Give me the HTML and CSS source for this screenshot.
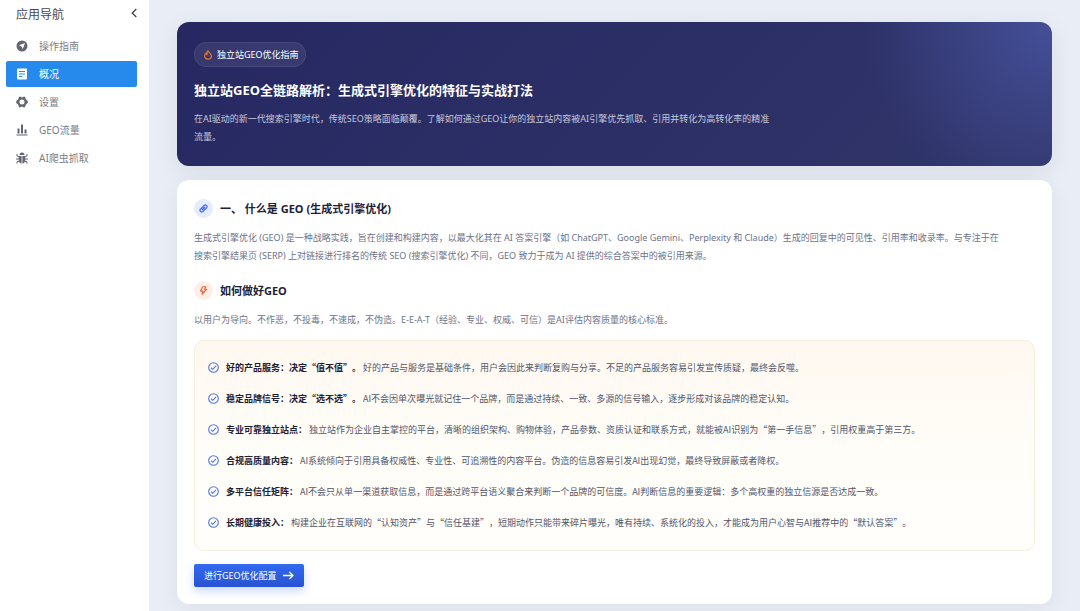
FILE: index.html
```
<!DOCTYPE html>
<html lang="zh-CN">
<head>
    <meta charset="UTF-8">
    <meta name="viewport" content="width=device-width, initial-scale=1.0">
    <title>独立站GEO优化指南</title>
    <link rel="stylesheet" href="styles.css">
</head>
<body>
    <aside class="sidebar">
        <div class="sidebar-header">
            <h2>应用导航</h2>
            <button class="collapse-btn" type="button" aria-label="收起导航">
                <svg width="6" height="10" viewBox="0 0 6 10" fill="none" stroke="currentColor" stroke-width="1.3"><path d="M5.300 1 1.200 5l4.100 4"/></svg>
            </button>
        </div>
        <nav class="menu">
            <a href="#guide" class="menu-item">
                <svg class="menu-icon" viewBox="0 0 24 24" fill="currentColor"><path fill-rule="evenodd" d="M12 1a11 11 0 1 0 0 22 11 11 0 0 0 0-22zM18 6l-4.500 12-2.500-5-5-2.500z"/></svg>
                <span>操作指南</span>
            </a>
            <a href="#overview" class="menu-item active">
                <svg class="menu-icon" viewBox="0 0 24 24" fill="currentColor"><path fill-rule="evenodd" d="M4 1h16a2 2 0 0 1 2 2v18a2 2 0 0 1-2 2H4a2 2 0 0 1-2-2V3a2 2 0 0 1 2-2zM6 6v2h12V6zM6 11v2h12v-2zM6 16v2h7v-2z"/></svg>
                <span>概况</span>
            </a>
            <a href="#settings" class="menu-item">
                <svg class="menu-icon" viewBox="0 0 24 24" fill="currentColor"><path fill-rule="evenodd" d="M6 1.500h4l2 2 2-2h4l1.500 5 4 3.500v4l-4 3.500-1.500 5h-4l-2-2-2 2H6l-1.500-5-4-3.500v-4l4-3.500zM12 7a5 5 0 1 0 0 10 5 5 0 0 0 0-10z"/></svg>
                <span>设置</span>
            </a>
            <a href="#traffic" class="menu-item">
                <svg class="menu-icon" viewBox="0 0 24 24" fill="currentColor"><path d="M3 9h4v10H3zM10 1h4v18h-4zM17 11h4v8h-4zM1 21h22v2H1z"/></svg>
                <span>GEO流量</span>
            </a>
            <a href="#crawler" class="menu-item">
                <svg class="menu-icon" viewBox="0 0 24 24" fill="currentColor"><path d="M7 6a5 5 0 0 1 10 0zM5.500 8h5.700v15C8 22.500 5.500 20 5.500 16zM12.800 8h5.700v8c0 4-2.500 6.500-5.700 7z"/><path d="M7 10 2 8V4M17 10l5-2V4M6 14H0M18 14h6M7 18l-5 1.500V23M17 18l5 1.500V23" fill="none" stroke="currentColor" stroke-width="2"/></svg>
                <span>AI爬虫抓取</span>
            </a>
        </nav>
    </aside>

    <main class="content">
        <section class="hero">
            <div class="badge">
                <svg class="badge-icon" viewBox="0 0 20 20" fill="none" stroke="currentColor" stroke-width="2.4" stroke-linejoin="round"><path d="M10 1.500c.5 3 6.800 5.500 6.800 10.500a6.800 6.300 0 0 1-13.600 0c0-2.500 1.200-4.500 2.800-5.800.3 1.600 1 2.500 2 3C7.600 6.200 8.200 3.500 10 1.500z"/></svg>
                <span>独立站GEO优化指南</span>
            </div>
            <h1>独立站GEO全链路解析：生成式引擎优化的特征与实战打法</h1>
            <p>在AI驱动的新一代搜索引擎时代，传统SEO策略面临颠覆。了解如何通过GEO让你的独立站内容被AI引擎优先抓取、引用并转化为高转化率的精准流量。</p>
        </section>

        <section class="card">
            <div class="section-title">
                <span class="round-icon blue">
                    <svg width="9" height="9" viewBox="0 0 24 24" fill="none" stroke="currentColor" stroke-width="3.6" stroke-linecap="round" stroke-linejoin="round"><path d="M8.500 15.500l7-7M10.500 7l3-3a4.600 4.600 0 0 1 6.500 6.500l-3 3a4.600 4.600 0 0 1-5 1M13.500 17l-3 3A4.600 4.600 0 0 1 4 13.500l3-3a4.600 4.600 0 0 1 5-1"/></svg>
                </span>
                <h2>一、 什么是 GEO (生成式引擎优化)</h2>
            </div>
            <p class="text">生成式引擎优化 (GEO) 是一种战略实践，旨在创建和构建内容，以最大化其在 AI 答案引擎（如 ChatGPT、Google Gemini、Perplexity 和 Claude）生成的回复中的可见性、引用率和收录率。与专注于在搜索引擎结果页 (SERP) 上对链接进行排名的传统 SEO (搜索引擎优化) 不同，GEO 致力于成为 AI 提供的综合答案中的被引用来源。</p>

            <div class="section-title">
                <span class="round-icon orange">
                    <svg width="9" height="9" viewBox="0 0 24 24" fill="none" stroke="currentColor" stroke-width="3" stroke-linejoin="round"><path d="M9.500 2H18l-3.500 6.500H21L8 22l2.500-8.500H4z"/></svg>
                </span>
                <h2>如何做好GEO</h2>
            </div>
            <p class="text">以用户为导向。不作恶，不投毒，不速成，不伪造。E-E-A-T（经验、专业、权威、可信）是AI评估内容质量的核心标准。</p>

            <ul class="points">
                <li>
                    <svg class="check" viewBox="0 0 24 24"><circle cx="12" cy="12" r="10.500"/><path d="M6.500 12.500l4 3.500 7-7.500"/></svg>
                    <p><strong>好的产品服务：决定“值不值”。</strong>好的产品与服务是基础条件，用户会因此来判断复购与分享。不足的产品服务容易引发宣传质疑，最终会反噬。</p>
                </li>
                <li>
                    <svg class="check" viewBox="0 0 24 24"><circle cx="12" cy="12" r="10.500"/><path d="M6.500 12.500l4 3.500 7-7.500"/></svg>
                    <p><strong>稳定品牌信号：决定“选不选”。</strong>AI不会因单次曝光就记住一个品牌，而是通过持续、一致、多源的信号输入，逐步形成对该品牌的稳定认知。</p>
                </li>
                <li>
                    <svg class="check" viewBox="0 0 24 24"><circle cx="12" cy="12" r="10.500"/><path d="M6.500 12.500l4 3.500 7-7.500"/></svg>
                    <p><strong>专业可靠独立站点：</strong>独立站作为企业自主掌控的平台，清晰的组织架构、购物体验，产品参数、资质认证和联系方式，就能被AI识别为“第一手信息”，引用权重高于第三方。</p>
                </li>
                <li>
                    <svg class="check" viewBox="0 0 24 24"><circle cx="12" cy="12" r="10.500"/><path d="M6.500 12.500l4 3.500 7-7.500"/></svg>
                    <p><strong>合规高质量内容：</strong>AI系统倾向于引用具备权威性、专业性、可追溯性的内容平台。伪造的信息容易引发AI出现幻觉，最终导致屏蔽或者降权。</p>
                </li>
                <li>
                    <svg class="check" viewBox="0 0 24 24"><circle cx="12" cy="12" r="10.500"/><path d="M6.500 12.500l4 3.500 7-7.500"/></svg>
                    <p><strong>多平台信任矩阵：</strong>AI不会只从单一渠道获取信息，而是通过跨平台语义聚合来判断一个品牌的可信度。AI判断信息的重要逻辑：多个高权重的独立信源是否达成一致。</p>
                </li>
                <li>
                    <svg class="check" viewBox="0 0 24 24"><circle cx="12" cy="12" r="10.500"/><path d="M6.500 12.500l4 3.500 7-7.500"/></svg>
                    <p><strong>长期健康投入：</strong>构建企业在互联网的“认知资产”与“信任基建”，短期动作只能带来碎片曝光，唯有持续、系统化的投入，才能成为用户心智与AI推荐中的“默认答案”。</p>
                </li>
            </ul>

            <button class="primary-btn" type="button">
                <span>进行GEO优化配置</span>
                <svg width="11" height="9" viewBox="0 0 11 9" fill="none" stroke="currentColor" stroke-width="1.3"><path d="M0 4.500h10M6.300 1 10 4.500 6.300 8"/></svg>
            </button>
        </section>
    </main>
</body>
</html>
```
FILE: styles.css
```
* {
    box-sizing: border-box;
    margin: 0;
    padding: 0;
}

body {
    display: flex;
    min-height: 100vh;
    font-family: "Noto Sans", "Noto Sans CJK SC", sans-serif;
    font-size: 9px;
    line-height: 18px;
    color: #6b7289;
    background: #e9edf5;
    text-spacing-trim: space-all;
}

.sidebar {
    flex: 0 0 149px;
    padding: 6px 12px 0 6px;
    background: #fff;
}

.sidebar-header {
    display: flex;
    align-items: center;
    justify-content: space-between;
    height: 18px;
    margin-bottom: 9px;
    padding-left: 10px;
}

.sidebar-header h2 {
    font-size: 12px;
    font-weight: 400;
    color: #45484f;
}

.collapse-btn {
    display: flex;
    align-self: flex-start;
    padding: 2px 0;
    border: none;
    background: none;
    color: #444;
    cursor: pointer;
}

.menu {
    display: flex;
    flex-direction: column;
    gap: 2px;
}

.menu-item {
    display: flex;
    align-items: center;
    gap: 11px;
    height: 26px;
    padding: 0 10px;
    border-radius: 2px;
    font-size: 10px;
    color: #7a7d84;
    text-decoration: none;
}

.menu-icon {
    width: 12px;
    height: 12px;
    color: #636773;
}

.menu-item.active {
    background: #268aed;
    color: #fff;
}

.menu-item.active .menu-icon {
    color: #fff;
}

.content {
    flex: 1;
    min-width: 0;
    display: flex;
    flex-direction: column;
    gap: 14px;
    padding: 22px 28px 7px;
}

.hero {
    padding: 20px 17px;
    border-radius: 12px;
    color: #fff;
    background:
        radial-gradient(circle at 100% 0, rgba(83, 98, 185, 0.6), rgba(83, 98, 185, 0) 190px),
        linear-gradient(135deg, #272862 0%, #303569 100%);
    box-shadow: 0 6px 24px rgba(30, 35, 60, 0.08);
}

.badge {
    display: inline-flex;
    align-items: center;
    gap: 4px;
    height: 25px;
    padding: 0 6px 0 8px;
    border: 1px solid rgba(255, 255, 255, 0.08);
    border-radius: 13px;
    background: rgba(255, 255, 255, 0.08);
}

.badge-icon {
    width: 10px;
    height: 10px;
    color: #f0742e;
}

.hero h1 {
    margin: 14px 0 11px;
    font-size: 13px;
    line-height: 18px;
    font-weight: 700;
}

.hero p {
    max-width: 580px;
    color: #c6c8dc;
}

.card {
    padding: 19px 17px 17px;
    border-radius: 12px;
    background: #fff;
    box-shadow: 0 6px 24px rgba(30, 35, 60, 0.06);
}

.section-title {
    display: flex;
    align-items: center;
    gap: 7px;
    margin-bottom: 11px;
}

.section-title h2 {
    font-size: 11px;
    line-height: 19px;
    color: #1d2138;
}

.round-icon {
    display: flex;
    align-items: center;
    justify-content: center;
    width: 19px;
    height: 19px;
    border-radius: 50%;
}

.round-icon.blue {
    background: #e5ecfd;
    color: #4d74ee;
}

.round-icon.orange {
    background: #fdefe8;
    color: #ee6537;
}

.text {
    padding-right: 30px;
}

.text + .section-title {
    margin-top: 16px;
}

.points {
    margin: 11px 0 13px;
    padding: 11px 13px 12px;
    border: 1px solid #f6efdf;
    border-radius: 10px;
    background: linear-gradient(#fff8f0, #fffdf8 50%, #fffefa);
    font-family: "Noto Sans CJK SC", sans-serif;
    list-style: none;
    color: #50566c;
}

.points li {
    display: flex;
    align-items: center;
    gap: 7px;
    min-height: 31px;
}

.points strong {
    margin-right: 2px;
    color: #1d2138;
}

.check {
    flex: none;
    width: 11px;
    height: 11px;
    fill: none;
    stroke: #4d76e8;
    stroke-width: 2.4;
}

.primary-btn {
    display: flex;
    align-items: center;
    gap: 6px;
    height: 23px;
    padding: 0 10px;
    border: none;
    border-radius: 2px;
    font: inherit;
    color: #fff;
    background: linear-gradient(#3269ee, #2753d2);
    box-shadow: 0 4px 10px rgba(47, 95, 230, 0.25);
    cursor: pointer;
}
```
